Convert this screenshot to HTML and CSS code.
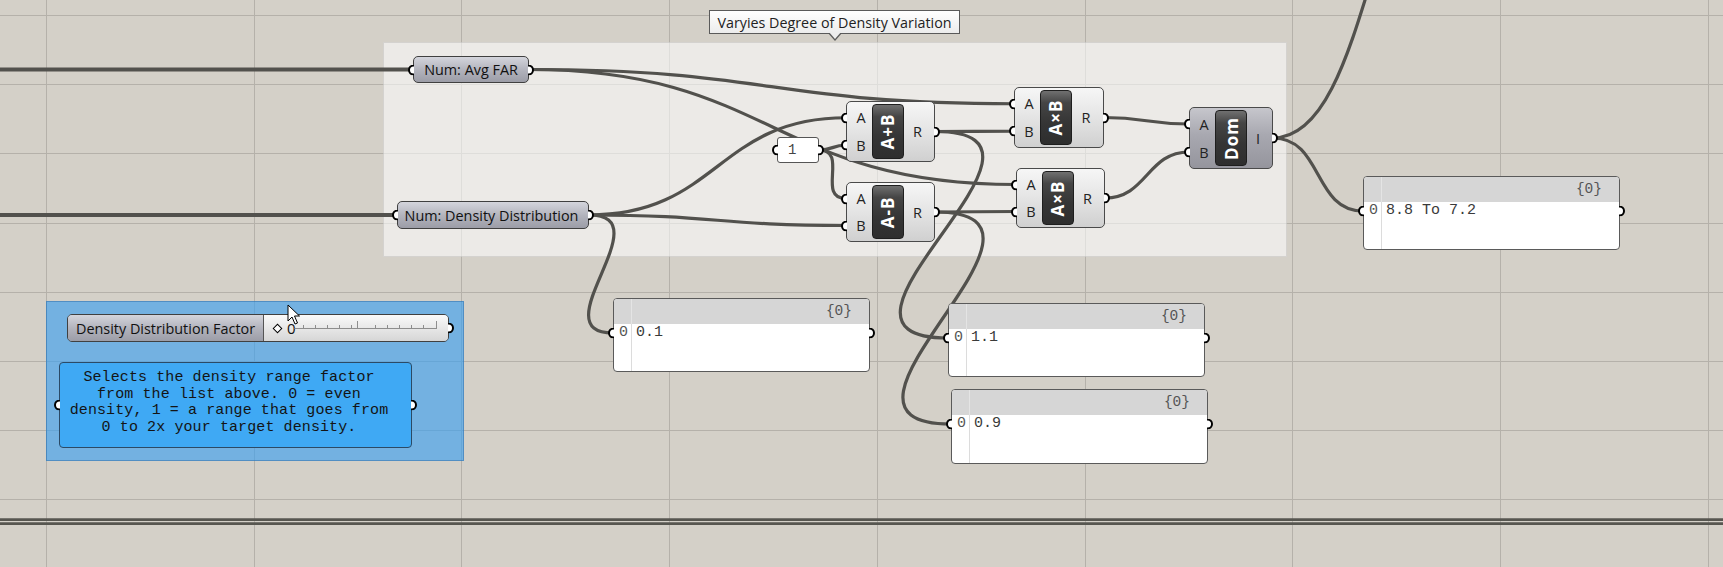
FILE: index.html
```html
<!DOCTYPE html>
<html lang="en">
<head>
<meta charset="utf-8">
<title>Grasshopper canvas</title>
<link rel="stylesheet" href="styles.css">
</head>
<body>
<div class="canvas">
  <svg class="layer" width="1723" height="567" shape-rendering="crispEdges">
    <g class="gridlines">
      <line x1="46.5" y1="0" x2="46.5" y2="567"/>
      <line x1="254.5" y1="0" x2="254.5" y2="567"/>
      <line x1="461.5" y1="0" x2="461.5" y2="567"/>
      <line x1="669.5" y1="0" x2="669.5" y2="567"/>
      <line x1="877.5" y1="0" x2="877.5" y2="567"/>
      <line x1="1085.5" y1="0" x2="1085.5" y2="567"/>
      <line x1="1292.5" y1="0" x2="1292.5" y2="567"/>
      <line x1="1500.5" y1="0" x2="1500.5" y2="567"/>
      <line x1="1708.5" y1="0" x2="1708.5" y2="567"/>
      <line x1="0" y1="15.5" x2="1723" y2="15.5"/>
      <line x1="0" y1="84.5" x2="1723" y2="84.5"/>
      <line x1="0" y1="153.5" x2="1723" y2="153.5"/>
      <line x1="0" y1="223.5" x2="1723" y2="223.5"/>
      <line x1="0" y1="292.5" x2="1723" y2="292.5"/>
      <line x1="0" y1="361.5" x2="1723" y2="361.5"/>
      <line x1="0" y1="430.5" x2="1723" y2="430.5"/>
      <line x1="0" y1="499.5" x2="1723" y2="499.5"/>
    </g>
  </svg>

  <div class="group group-grey"></div>
  <div class="group group-blue"></div>

  <svg class="layer" width="1723" height="567">
    <g class="wires">
      <path class="thick" d="M0 69.5 H413"/>
      <path class="thick" d="M0 215 H397"/>
      <path d="M529 69.5 C772 69.5 771 103.75 1014 103.75"/>
      <path d="M529 69.5 C772 69.5 773 184.5 1016 184.5"/>
      <path d="M589 215 C718 215 717 117.75 846 117.75"/>
      <path d="M589 215 C718 215 717 225.5 846 225.5"/>
      <path d="M589 215 C664 215 539 333 613 333"/>
      <path d="M819 150 C833 150 832 145.25 846 145.25"/>
      <path d="M819 150 C849 150 816 198.5 846 198.5"/>
      <path d="M935 131.5 C975 131.5 974 131.25 1014 131.25"/>
      <path d="M935 131.5 C1095 131.5 788 338 948 338"/>
      <path d="M935 212 C975 212 976 211.5 1016 211.5"/>
      <path d="M935 212 C1095 212 791 424 951 424"/>
      <path d="M1104 117.5 C1146 117.5 1147 124 1189 124"/>
      <path d="M1105 198 C1147 198 1147 152 1189 152"/>
      <path d="M1273 138 C1323 138 1313 211 1363 211"/>
      <path d="M1273 138 C1373 138 1370 -180 1470 -180"/>
      <path class="rail" d="M0 519.7 H1723"/>
      <path class="rail" d="M0 523.7 H1723"/>
    </g>
  </svg>

  <div class="balloon">Varyies Degree of Density Variation</div>

  <div class="param p-far">Num: Avg FAR<span class="grip gi g-m"></span><span class="grip go g-m"></span></div>
  <div class="param p-dens">Num: Density Distribution<span class="grip gi g-m"></span><span class="grip go g-m"></span></div>

  <div class="one">1<span class="grip gi g-m"></span><span class="grip go g-m"></span></div>

  <div class="comp c-add">
    <div class="ins"><span>A</span><span>B</span></div>
    <div class="core"><span>A+B</span></div>
    <div class="outs"><span>R</span></div>
    <span class="grip gi g-a"></span><span class="grip gi g-b"></span><span class="grip go g-m"></span>
  </div>
  <div class="comp c-sub">
    <div class="ins"><span>A</span><span>B</span></div>
    <div class="core"><span>A-B</span></div>
    <div class="outs"><span>R</span></div>
    <span class="grip gi g-a"></span><span class="grip gi g-b"></span><span class="grip go g-m"></span>
  </div>
  <div class="comp c-mul1">
    <div class="ins"><span>A</span><span>B</span></div>
    <div class="core"><span>A×B</span></div>
    <div class="outs"><span>R</span></div>
    <span class="grip gi g-a"></span><span class="grip gi g-b"></span><span class="grip go g-m"></span>
  </div>
  <div class="comp c-mul2">
    <div class="ins"><span>A</span><span>B</span></div>
    <div class="core"><span>A×B</span></div>
    <div class="outs"><span>R</span></div>
    <span class="grip gi g-a"></span><span class="grip gi g-b"></span><span class="grip go g-m"></span>
  </div>
  <div class="comp comp-dark c-dom">
    <div class="ins"><span>A</span><span>B</span></div>
    <div class="core"><span>Dom</span></div>
    <div class="outs"><span>I</span></div>
    <span class="grip gi g-a"></span><span class="grip gi g-b"></span><span class="grip go g-m"></span>
  </div>

  <div class="panel pn-01">
    <div class="panel-body">
      <div class="ph-idx"></div><div class="ph">{0}</div>
      <div class="pi">0</div><div class="pv">0.1</div>
    </div>
    <span class="grip gi g-row"></span><span class="grip go g-row"></span>
  </div>
  <div class="panel pn-11">
    <div class="panel-body">
      <div class="ph-idx"></div><div class="ph">{0}</div>
      <div class="pi">0</div><div class="pv">1.1</div>
    </div>
    <span class="grip gi g-row"></span><span class="grip go g-row"></span>
  </div>
  <div class="panel pn-09">
    <div class="panel-body">
      <div class="ph-idx"></div><div class="ph">{0}</div>
      <div class="pi">0</div><div class="pv">0.9</div>
    </div>
    <span class="grip gi g-row"></span><span class="grip go g-row"></span>
  </div>
  <div class="panel pn-88">
    <div class="panel-body">
      <div class="ph-idx"></div><div class="ph">{0}</div>
      <div class="pi">0</div><div class="pv">8.8 To 7.2</div>
    </div>
    <span class="grip gi g-row"></span><span class="grip go g-row"></span>
  </div>

  <div class="slider">
    <div class="slider-name">Density Distribution Factor</div>
    <div class="slider-track">
      <span class="diamond"></span>
      <span class="sval">0</span>
      <svg class="ticks" width="150" height="12" viewBox="0 0 150 12">
        <path d="M0.5 11.5 H143"/>
        <path d="M9.5 8 V11 M21.5 8 V11 M33.5 8 V11 M45.5 8 V11 M57.5 8 V11 M81.5 8 V11 M93.5 8 V11 M105.5 8 V11 M117.5 8 V11 M129.5 8 V11 M63.5 4 V11 M142.5 4 V11"/>
      </svg>
    </div>
    <span class="grip go g-m"></span>
  </div>

  <div class="note">Selects the density range factor from the list above. 0 = even density, 1 = a range that goes from 0 to 2x your target density.<span class="grip gi g-m"></span><span class="grip go g-m"></span></div>

  <svg class="cursor" width="14" height="22" viewBox="0 0 14 22">
    <path d="M1 1 L1 17 L5 13 L8 20 L10.5 19 L7.5 12 L12.5 12 Z"/>
  </svg>
</div>
</body>
</html>
```

FILE: styles.css
```css
* { box-sizing: border-box; }
html, body { margin: 0; padding: 0; }
body {
  width: 1723px;
  height: 567px;
  overflow: hidden;
  background: #d4d0c8;
  font-family: "Open Sans", "Noto Sans", sans-serif;
  color: #111;
}
.canvas {
  position: relative;
  width: 1723px;
  height: 567px;
  overflow: hidden;
  background: #d4d0c8;
}
.layer { position: absolute; left: 0; top: 0; }
.gridlines line { stroke: #b5b1aa; stroke-width: 1; }

.group { position: absolute; }
.group-grey {
  left: 383px; top: 42px; width: 904px; height: 215px;
  background: rgba(255, 255, 255, 0.56);
  border: 1px solid rgba(0, 0, 0, 0.1);
}
.group-blue {
  left: 46px; top: 301px; width: 418px; height: 160px;
  background: rgba(60, 160, 240, 0.64);
  border: 1px solid rgba(40, 100, 160, 0.45);
}

.wires path {
  fill: none;
  stroke: #52514d;
  stroke-width: 3.2;
}
.wires path.thick { stroke-width: 4; }
.wires path.rail { stroke-width: 2.7; stroke: #575650; }

/* balloon */
.balloon {
  position: absolute;
  left: 709px; top: 10px; width: 251px; height: 24px;
  border: 1px solid #5a5a5a;
  background: linear-gradient(#ffffff, #ececec);
  font-size: 14.3px;
  color: #222;
  display: flex; align-items: center; justify-content: center;
  white-space: nowrap;
}
.balloon::before {
  content: "";
  position: absolute; left: 50%; bottom: -8px; margin-left: -7px;
  border-left: 7px solid transparent; border-right: 7px solid transparent;
  border-top: 8px solid #5a5a5a;
}
.balloon::after {
  content: "";
  position: absolute; left: 50%; bottom: -6px; margin-left: -6px;
  border-left: 6px solid transparent; border-right: 6px solid transparent;
  border-top: 7px solid #ececec;
}

/* grips */
.grip {
  position: absolute;
  width: 6px; height: 11px;
  border: 2.5px solid #000;
  background: #fff;
  transform: translateY(-50%);
}
.gi { left: -6px; border-right: 0; border-radius: 6px 0 0 6px; }
.go { right: -6px; border-left: 0; border-radius: 0 6px 6px 0; }
.g-m { top: 50%; }
.g-a { top: calc(2px + (100% - 4px) * 0.25); }
.g-b { top: calc(2px + (100% - 4px) * 0.75); }
.g-row { top: 34px; }

/* parameters */
.param {
  position: absolute;
  border: 1px solid #404040;
  border-radius: 5px;
  background: linear-gradient(#d4d5dc, #b3b4bd 50%, #9c9da7);
  display: flex; align-items: center; justify-content: center;
  font-size: 14.4px;
  white-space: nowrap;
}
.p-far { left: 413px; top: 56px; width: 116px; height: 27px; }
.p-dens { left: 397px; top: 201px; width: 192px; height: 28px; padding-right: 3px; }

.one {
  position: absolute;
  left: 777px; top: 137px; width: 42px; height: 26px;
  border: 1px solid #555;
  border-radius: 3px;
  background: #fff;
  font-family: "Liberation Mono", monospace;
  font-size: 14px;
  color: #444;
  line-height: 24px;
  padding-left: 10px;
}

/* components */
.comp {
  position: absolute;
  display: grid;
  grid-template-columns: 22px 32px 1fr;
  padding: 2px 3px;
  border: 1px solid #4a4a4a;
  border-radius: 5px;
  background: linear-gradient(#f6f6f6, #e6e6e6 45%, #d0d0d0);
}
.comp-dark { background: linear-gradient(#c6c6cc, #a8a8b0 45%, #95959d); }
.c-add { left: 846px; top: 101px; width: 89px; height: 61px; }
.c-sub { left: 846px; top: 182px; width: 89px; height: 60px; }
.c-mul1 { left: 1014px; top: 87px; width: 90px; height: 61px; }
.c-mul2 { left: 1016px; top: 168px; width: 89px; height: 60px; }
.c-dom { left: 1189px; top: 107px; width: 84px; height: 62px; }
.ins { display: flex; flex-direction: column; }
.ins span, .outs span { font-size: 14.5px; color: #222; }
.ins span { flex: 1; display: flex; align-items: center; justify-content: center; }
.outs { display: flex; align-items: center; justify-content: center; }
.core {
  border: 1px solid #1e1e1e;
  border-radius: 4px;
  background: linear-gradient(#707070, #454545 22%, #353535 60%, #2e2e2e);
  display: flex; align-items: center; justify-content: center;
  overflow: hidden;
}
.core span {
  transform: rotate(-90deg);
  color: #fff;
  font-weight: 700;
  font-size: 17px;
  letter-spacing: 1px;
  white-space: nowrap;
}

/* panels */
.panel {
  position: absolute;
  width: 257px; height: 74px;
  border: 1px solid #5a5a5a;
  border-radius: 4px;
  background: #fff;
  font-family: "Liberation Mono", monospace;
  font-size: 15px;
  color: #3a3a3a;
}
.pn-01 { left: 613px; top: 298px; }
.pn-11 { left: 948px; top: 303px; }
.pn-09 { left: 951px; top: 389px; height: 75px; }
.pn-88 { left: 1363px; top: 176px; }
.panel-body {
  display: grid;
  grid-template-columns: 18px 1fr;
  grid-template-rows: 25px 1fr;
  height: 100%;
  border-radius: 3px;
  overflow: hidden;
}
.ph-idx { background: #d6d6d6; border-right: 1px solid #e4e4e4; }
.ph {
  background: #d6d6d6;
  text-align: right;
  padding-right: 17px;
  line-height: 24px;
  font-size: 14.5px;
  color: #555;
}
.pi {
  border-right: 1px solid #dcdcdc;
  padding-left: 5px;
  line-height: 17px;
  color: #555;
}
.pv { padding-left: 4px; line-height: 17px; white-space: pre; }

/* slider */
.slider {
  position: absolute;
  left: 67px; top: 314px; width: 382px; height: 28px;
  border: 1px solid #404040;
  border-radius: 5px;
  display: flex;
}
.slider-name {
  width: 196px;
  border-right: 1px solid #555;
  border-radius: 4px 0 0 4px;
  background: linear-gradient(#d4d5dc, #b3b4bd 50%, #9c9da7);
  font-size: 14.4px;
  display: flex; align-items: center;
  padding-left: 8px;
  white-space: nowrap;
}
.slider-track {
  flex: 1;
  position: relative;
  border-radius: 0 4px 4px 0;
  background: linear-gradient(#fafafa, #e8e8e8 50%, #d6d6d6);
  display: flex; align-items: center;
}
.diamond {
  width: 7px; height: 7px;
  margin-left: 10px;
  border: 1.5px solid #000;
  background: #fff;
  transform: rotate(45deg);
}
.sval { margin-left: 6px; font-size: 15px; color: #111; }
.ticks { position: absolute; left: 30px; top: 2px; }
.ticks path { stroke: #8e8e8e; stroke-width: 1; fill: none; }

/* note panel */
.note {
  position: absolute;
  left: 59px; top: 362px; width: 353px; height: 86px;
  background: #3fa9f4;
  border: 1px solid #2b4a66;
  border-radius: 4px;
  font-family: "Liberation Mono", monospace;
  font-size: 15px;
  letter-spacing: 0.1px;
  line-height: 16.67px;
  text-align: center;
  padding: 7px 17px 0 4px;
  color: #141414;
}

.cursor { position: absolute; left: 287px; top: 304px; }
.cursor path { fill: #fff; stroke: #000; stroke-width: 1; stroke-linejoin: round; }
```
